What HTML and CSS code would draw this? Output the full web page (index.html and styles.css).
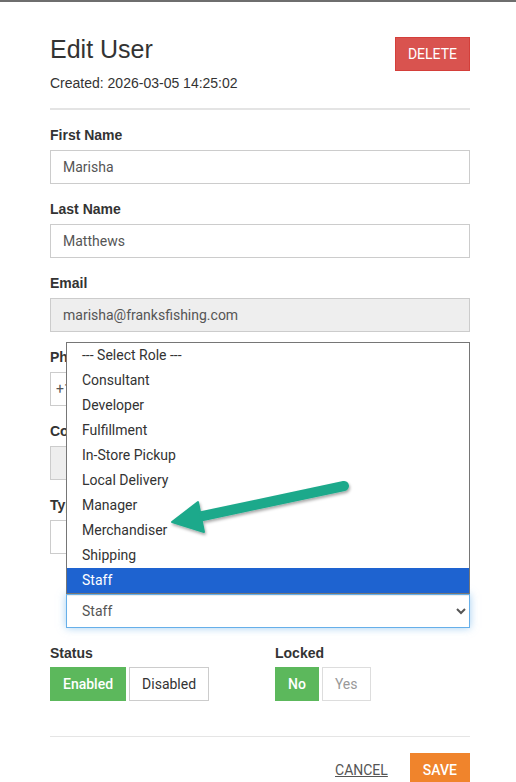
FILE: index.html
```html
<!DOCTYPE html>
<html lang="en">
<head>
<meta charset="utf-8">
<title>Edit User</title>
<link rel="stylesheet" href="styles.css">
</head>
<body>
<div class="modal">
  <div class="modal-body">
    <div class="modal-head">
      <div>
        <h2 class="title">Edit User</h2>
        <div class="created">Created: 2026-03-05 14:25:02</div>
      </div>
      <button class="btn btn-delete" type="button">DELETE</button>
    </div>
    <hr class="rule">

    <form class="user-form">
      <div class="group">
        <label class="lbl">First Name</label>
        <input class="field" type="text" value="Marisha">
      </div>
      <div class="group">
        <label class="lbl">Last Name</label>
        <input class="field" type="text" value="Matthews">
      </div>
      <div class="group">
        <label class="lbl">Email</label>
        <input class="field field-readonly" type="text" value="marisha@franksfishing.com" readonly>
      </div>
      <div class="group">
        <label class="lbl">Phone</label>
        <input class="field field-phone" type="text" value="+1 (555) 014-2298">
      </div>
      <div class="group">
        <label class="lbl">Company</label>
        <input class="field field-readonly" type="text" value="" readonly>
      </div>
      <div class="group">
        <label class="lbl">Type</label>
        <input class="field" type="text" value="">
      </div>
      <div class="group group-role">
        <label class="lbl">Role</label>
        <div class="select-wrap">
          <select class="field field-select">
            <option>--- Select Role ---</option>
            <option>Consultant</option>
            <option>Developer</option>
            <option>Fulfillment</option>
            <option>In-Store Pickup</option>
            <option>Local Delivery</option>
            <option>Manager</option>
            <option>Merchandiser</option>
            <option>Shipping</option>
            <option selected>Staff</option>
          </select>
          <ul class="role-list">
            <li>--- Select Role ---</li>
            <li>Consultant</li>
            <li>Developer</li>
            <li>Fulfillment</li>
            <li>In-Store Pickup</li>
            <li>Local Delivery</li>
            <li>Manager</li>
            <li>Merchandiser</li>
            <li>Shipping</li>
            <li class="active">Staff</li>
          </ul>
        </div>
      </div>

      <div class="toggles">
        <div>
          <label class="lbl">Status</label>
          <div class="btn-group">
            <button class="btn btn-on" type="button">Enabled</button>
            <button class="btn btn-off" type="button">Disabled</button>
          </div>
        </div>
        <div>
          <label class="lbl">Locked</label>
          <div class="btn-group">
            <button class="btn btn-on" type="button">No</button>
            <button class="btn btn-off btn-muted" type="button">Yes</button>
          </div>
        </div>
      </div>
    </form>

    <hr class="rule rule-foot">
    <div class="actions">
      <a class="cancel" href="#">CANCEL</a>
      <button class="btn btn-save" type="button">SAVE</button>
    </div>
  </div>

  <svg class="pointer" width="200" height="80" viewBox="160 470 200 80" aria-hidden="true">
    <defs>
      <filter id="soft" x="-20%" y="-40%" width="140%" height="180%">
        <feDropShadow dx="1" dy="2" stdDeviation="1.6" flood-color="#000" flood-opacity="0.35"/>
      </filter>
    </defs>
    <g filter="url(#soft)" fill="#1ea98b" stroke="#1ea98b">
      <line x1="344" y1="486" x2="198" y2="517" stroke-width="10" stroke-linecap="round"/>
      <polygon points="172,522 198,502 204,532" stroke-width="2" stroke-linejoin="round"/>
    </g>
  </svg>
</div>
</body>
</html>
```

FILE: styles.css
```css
* {
  box-sizing: border-box;
}

html, body {
  margin: 0;
  padding: 0;
  background: #fff;
}

body {
  font-family: Roboto, "Liberation Sans", Arial, sans-serif;
  font-size: 14px;
  color: #333;
}

.modal {
  position: relative;
  width: 516px;
  height: 782px;
  overflow: hidden;
  border-top: 2px solid #6e6e6e;
}

.modal-body {
  padding: 32px 46px 0 50px;
}

.modal-head {
  display: flex;
  justify-content: space-between;
  align-items: flex-start;
}

.title {
  margin: 0;
  font-family: "Liberation Sans", Arial, sans-serif;
  font-weight: 400;
  font-size: 25px;
  line-height: 30px;
  color: #333;
}

.created {
  margin-top: 9px;
  font-family: "Liberation Sans", Arial, sans-serif;
  font-size: 14px;
  line-height: 20px;
  color: #333;
}

.btn {
  font-family: Roboto, "Liberation Sans", Arial, sans-serif;
  font-size: 14px;
  line-height: 20px;
  border: 1px solid transparent;
  border-radius: 0;
  cursor: pointer;
  margin: 0;
}

.btn-delete {
  margin-top: 3px;
  height: 34px;
  padding: 6px 12px;
  background: #d9534f;
  border-color: #d43f3a;
  color: #fff;
}

.rule {
  margin: 15px 0 15px;
  border: 0;
  border-top: 2px solid #e4e4e4;
}

.user-form {
  margin: 0;
}

.group {
  margin-bottom: 15px;
}

.lbl {
  display: block;
  margin-bottom: 5px;
  font-family: "Liberation Sans", Arial, sans-serif;
  font-weight: 700;
  font-size: 14px;
  line-height: 20px;
  color: #333;
}

.field {
  display: block;
  width: 100%;
  height: 34px;
  padding: 6px 12px;
  font-family: Roboto, "Liberation Sans", Arial, sans-serif;
  font-size: 14px;
  line-height: 20px;
  color: #555;
  background: #fff;
  border: 1px solid #ccc;
  border-radius: 0;
  outline: none;
}

.field-readonly {
  background: #eee;
}

.field-phone {
  padding-left: 5px;
}

.group-role {
  margin-left: 16px;
}

.select-wrap {
  position: relative;
}

.field-select {
  padding-left: 11px;
  border-color: #66afe9;
  box-shadow: inset 0 1px 1px rgba(0, 0, 0, .075), 0 0 8px rgba(102, 175, 233, .6);
}

/* open option list of the role picker, drawn above the select */
.role-list {
  position: absolute;
  left: 0;
  right: 0;
  bottom: 100%;
  margin: 0;
  padding: 0;
  list-style: none;
  background: #fff;
  border: 1px solid #767676;
  z-index: 5;
}

.role-list li {
  height: 25px;
  padding-left: 15px;
  font-size: 14px;
  line-height: 25px;
  color: #333;
}

.role-list li.active {
  background: #1e63d0;
  color: #fff;
}

.toggles {
  display: grid;
  grid-template-columns: 1fr 1fr;
  column-gap: 30px;
}

.toggles .lbl {
  margin-bottom: 4px;
}

.btn-group {
  display: flex;
  gap: 3px;
}

.btn-group .btn {
  height: 34px;
  padding: 6px 12px;
}

.btn-on {
  background: #5cb85c;
  border-color: #5cb85c;
  color: #fff;
  font-weight: 500;
}

.btn-off {
  background: #fff;
  border-color: #ccc;
  color: #333;
}

.btn-muted {
  border-color: #ddd;
  color: #999;
}

.rule-foot {
  margin: 35px 0 16px;
  border-top: 1px solid #e5e5e5;
}

.actions {
  display: flex;
  justify-content: flex-end;
  align-items: center;
  gap: 22px;
}

.cancel {
  color: #555;
  text-decoration: underline;
  font-size: 14px;
  line-height: 20px;
}

.btn-save {
  height: 34px;
  padding: 6px 12px;
  background: #f0842c;
  border-color: #f0842c;
  color: #fff;
  font-weight: 500;
}

/* callout arrow pointing at a list entry */
.pointer {
  position: absolute;
  left: 160px;
  top: 468px;
  z-index: 10;
  pointer-events: none;
}
```
